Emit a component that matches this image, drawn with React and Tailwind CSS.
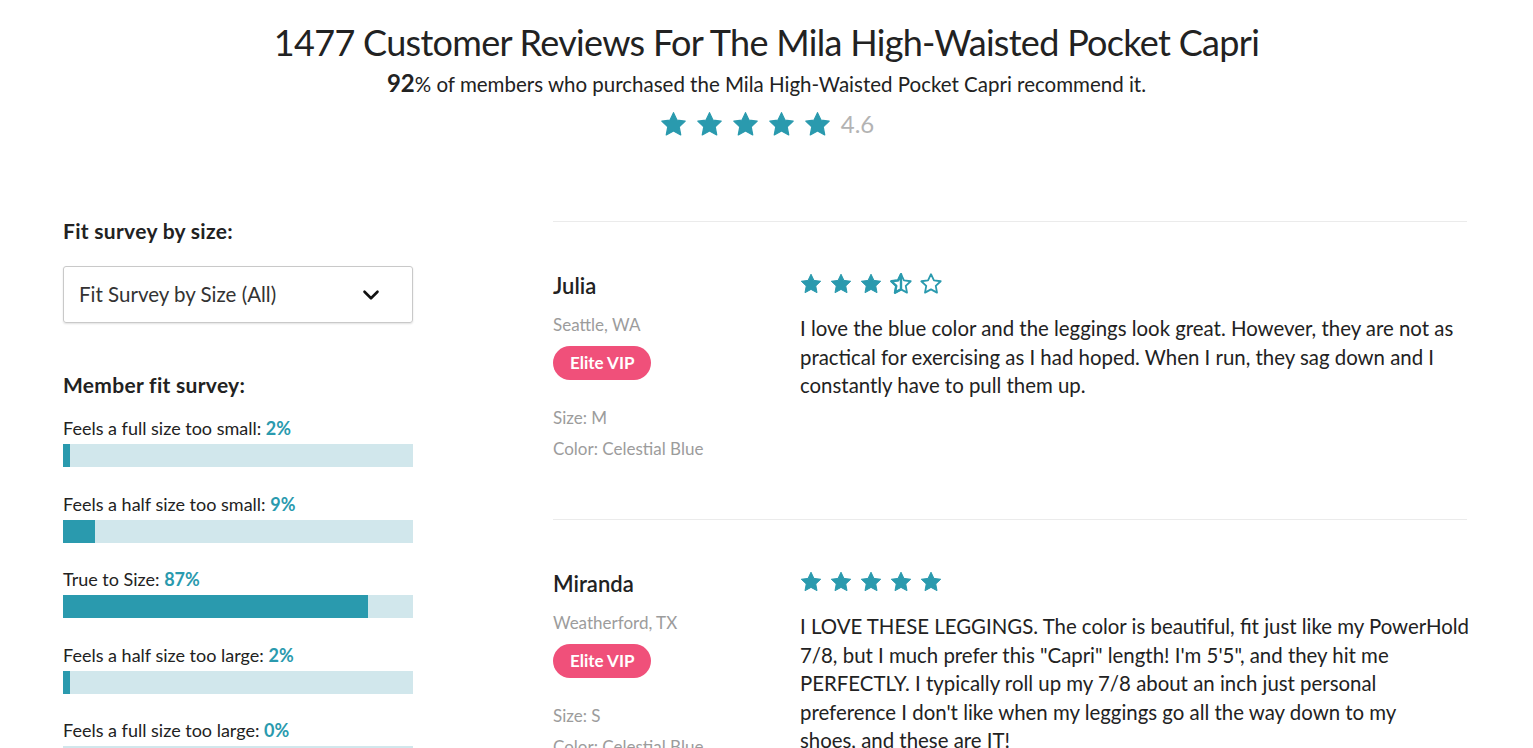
import { ChevronDown } from 'lucide-react';

const STAR = 'M12 2.2l2.95 6.2 6.75.85-4.95 4.7 1.25 6.7L12 17.4l-6 3.25 1.25-6.7L2.3 9.25l6.75-.85L12 2.2z';

function Star({ type = 'full', size = 24 }) {
    if (type === 'full') {
        return (
            <svg width={size} height={size} viewBox="0 0 24 24">
                <path d={STAR} fill="#2a9aae" stroke="#2a9aae" strokeWidth="1" strokeLinejoin="round" />
            </svg>
        );
    }
    if (type === 'half') {
        return (
            <svg width={size} height={size} viewBox="0 0 24 24">
                <path d={STAR} fill="none" stroke="#2a9aae" strokeWidth="1.8" strokeLinejoin="round" />
                <path d="M12 2.2v15.2l-6 3.25 1.25-6.7L2.3 9.25l6.75-.85z" fill="none" stroke="#2a9aae" strokeWidth="2.4" strokeLinejoin="round" />
            </svg>
        );
    }
    return (
        <svg width={size} height={size} viewBox="0 0 24 24">
            <path d={STAR} fill="none" stroke="#2a9aae" strokeWidth="1.8" strokeLinejoin="round" />
        </svg>
    );
}

const survey = [
    { label: 'Feels a full size too small', pct: 2 },
    { label: 'Feels a half size too small', pct: 9 },
    { label: 'True to Size', pct: 87 },
    { label: 'Feels a half size too large', pct: 2 },
    { label: 'Feels a full size too large', pct: 0 },
];

const reviews = [
    {
        name: 'Julia',
        location: 'Seattle, WA',
        size: 'M',
        color: 'Celestial Blue',
        stars: ['full', 'full', 'full', 'half', 'empty'],
        lines: [
            'I love the blue color and the leggings look great. However, they are not as',
            'practical for exercising as I had hoped. When I run, they sag down and I',
            'constantly have to pull them up.',
        ],
    },
    {
        name: 'Miranda',
        location: 'Weatherford, TX',
        size: 'S',
        color: 'Celestial Blue',
        stars: ['full', 'full', 'full', 'full', 'full'],
        lines: [
            'I LOVE THESE LEGGINGS. The color is beautiful, fit just like my PowerHold',
            '7/8, but I much prefer this "Capri" length! I\'m 5\'5", and they hit me',
            'PERFECTLY. I typically roll up my 7/8 about an inch just personal',
            'preference I don\'t like when my leggings go all the way down to my',
            'shoes, and these are IT!',
        ],
    },
];

export default function App() {
    return (
        <div className="h-[748px] overflow-hidden bg-white text-[#222] font-['Lato',sans-serif]">
            {/* Header */}
            <div className="flex flex-col items-center pt-[20px]">
                <h1 className="text-[36px] leading-[44px] tracking-[-0.7px] font-normal">
                    1477 Customer Reviews For The Mila High-Waisted Pocket Capri
                </h1>
                <p className="text-[20.5px] leading-[28px] mt-[5px]">
                    <span className="text-[24px] font-bold">92</span>% of members who purchased the Mila High-Waisted Pocket Capri recommend it.
                </p>
                <div className="flex items-center gap-[7px] mt-[8px]">
                    {[0, 1, 2, 3, 4].map((i) => (
                        <Star key={i} size={29} />
                    ))}
                    <span className="ml-[2px] text-[24px] text-[#b3b3b3]">4.6</span>
                </div>
            </div>

            <div className="flex pl-[63px] pr-[66px] mt-[79px] gap-[140px]">
                {/* Fit survey */}
                <aside className="w-[350px] shrink-0">
                    <h3 className="text-[21px] leading-[20px] font-bold tracking-[0.3px]">Fit survey by size:</h3>
                    <button className="mt-[25px] w-full h-[57px] flex items-center justify-between pl-[15px] pr-[28px] border border-[#c9c9c9] rounded-[3px] shadow-[0_1px_2px_rgba(0,0,0,0.12)] text-[20.5px] text-[#333]">
                        Fit Survey by Size (All)
                        <ChevronDown size={26} strokeWidth={2.4} color="#111" />
                    </button>

                    <h3 className="mt-[50px] text-[21px] leading-[24px] font-bold tracking-[0.3px]">Member fit survey:</h3>
                    <div className="mt-[20px] flex flex-col gap-[25.5px]">
                        {survey.map((s) => (
                            <div key={s.label}>
                                <p className="text-[18px] leading-[22px]">
                                    {s.label}: <span className="font-bold text-[#2a9aae]">{s.pct}%</span>
                                </p>
                                <div className="mt-[5px] h-[23px] bg-[#d1e7ec]">
                                    <div className="h-full bg-[#2a9aae]" style={{ width: `${s.pct}%` }} />
                                </div>
                            </div>
                        ))}
                    </div>
                </aside>

                {/* Reviews */}
                <main className="flex-1 min-w-0 border-t border-[#ebebeb]">
                    {reviews.map((r, idx) => (
                        <div key={r.name} className={`flex pt-[50px] pb-[59px] ${idx > 0 ? 'border-t border-[#ebebeb]' : ''}`}>
                            <div className="w-[247px] shrink-0">
                                <p className="text-[22px] leading-[28px] font-semibold">{r.name}</p>
                                <p className="mt-[14px] text-[17px] leading-[22px] text-[#9c9c9c]">{r.location}</p>
                                <span className="inline-block mt-[10px] px-[17px] h-[34px] leading-[34px] rounded-full bg-[#f0507a] text-white text-[17px] font-bold">
                                    Elite VIP
                                </span>
                                <p className="mt-[27px] text-[17px] leading-[22px] text-[#9c9c9c]">Size: {r.size}</p>
                                <p className="mt-[9px] text-[17px] leading-[22px] text-[#9c9c9c]">Color: {r.color}</p>
                            </div>
                            <div className="flex-1 min-w-0">
                                <div className="flex gap-[6px] -ml-[1px]">
                                    {r.stars.map((t, i) => (
                                        <Star key={i} type={t} size={24} />
                                    ))}
                                </div>
                                <div className="mt-[18px] text-[20.4px] leading-[28.5px]">
                                    {r.lines.map((l, i) => (
                                        <p key={i} className="whitespace-nowrap">{l}</p>
                                    ))}
                                </div>
                            </div>
                        </div>
                    ))}
                </main>
            </div>
        </div>
    );
}
